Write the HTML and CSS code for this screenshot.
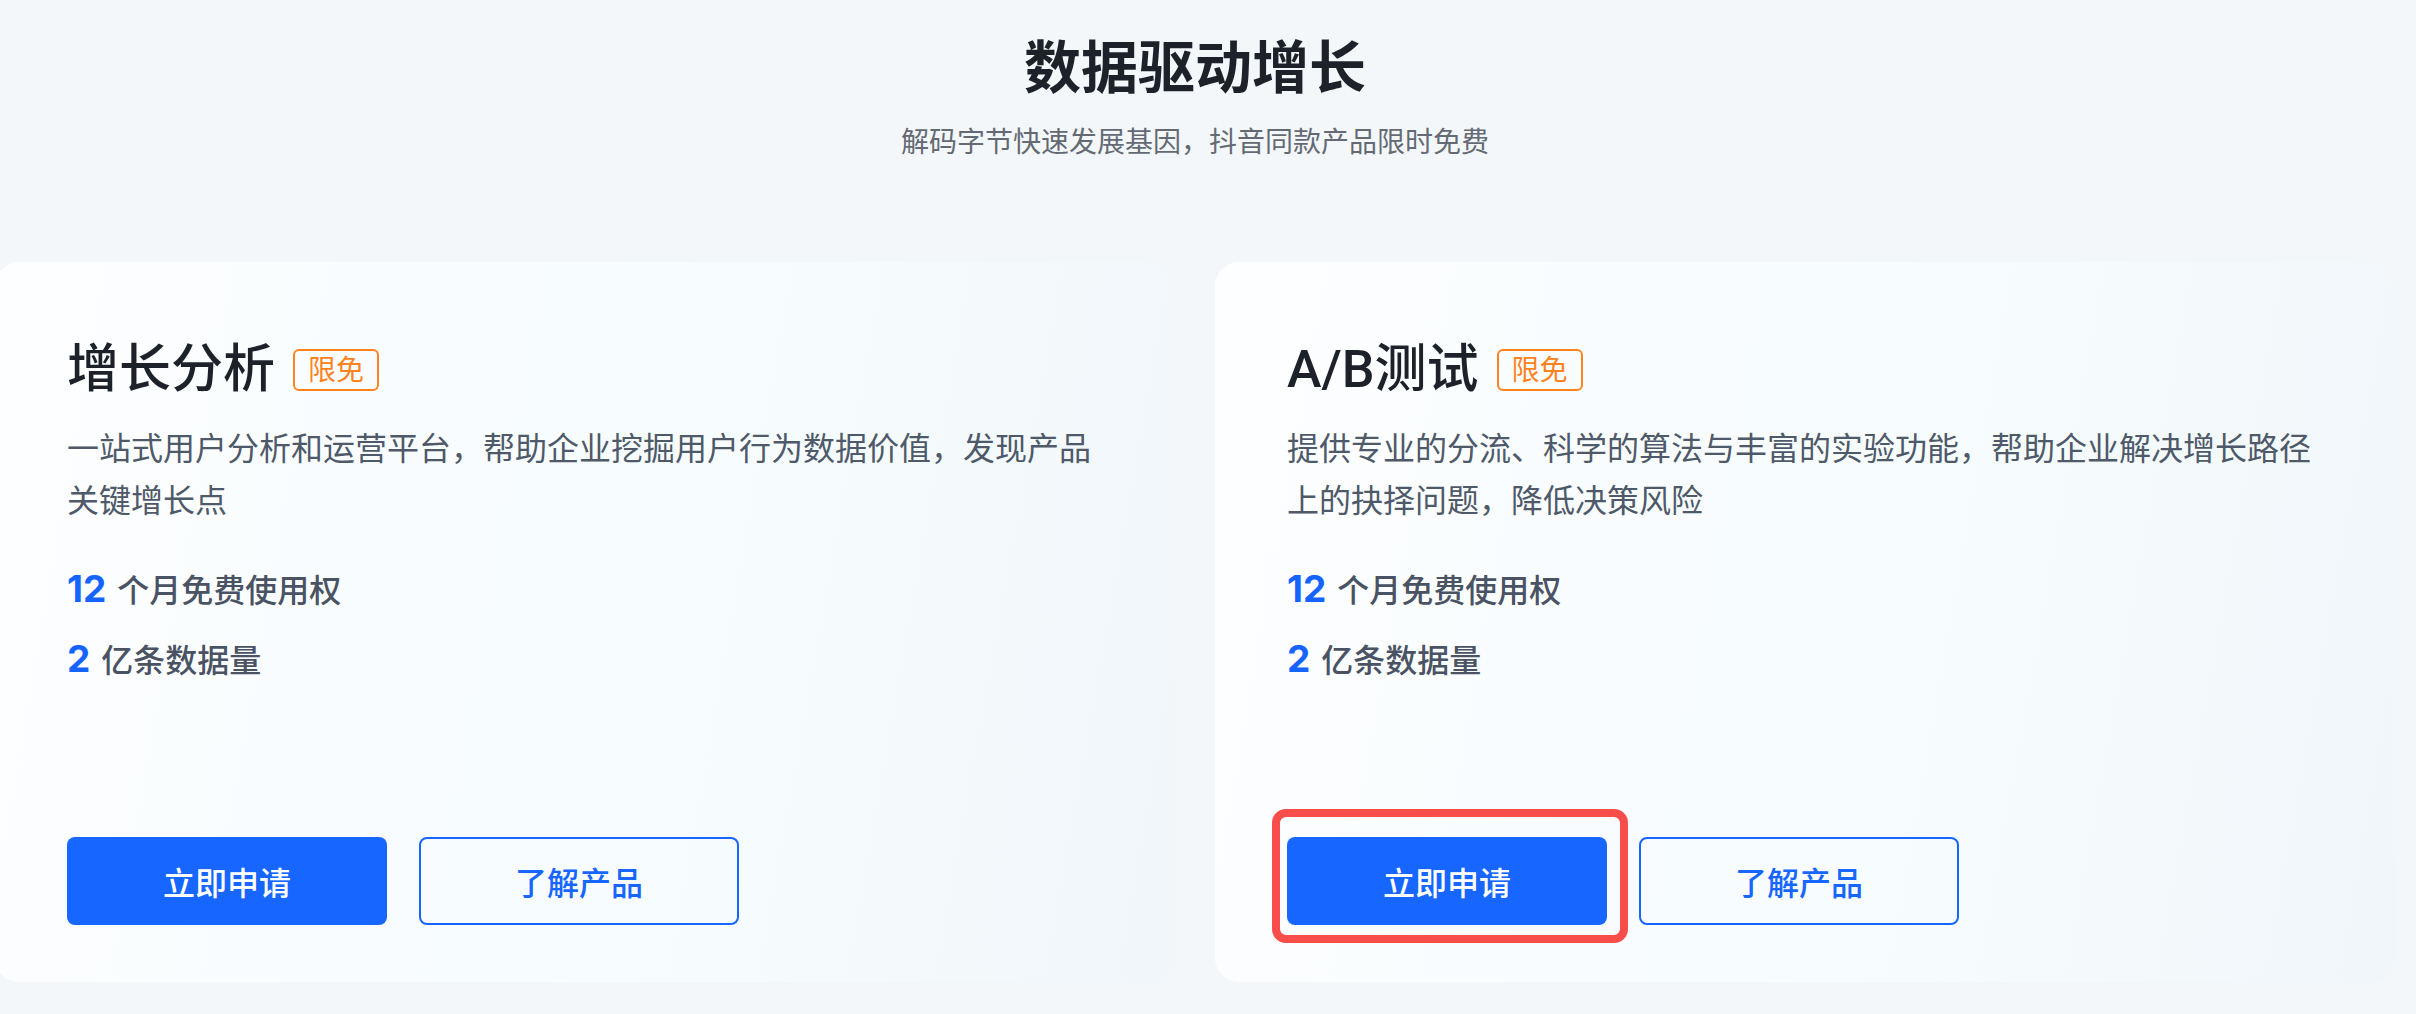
FILE: index.html
```html
<!DOCTYPE html>
<html lang="zh-CN">
<head>
<meta charset="utf-8">
<title>数据驱动增长</title>
<link rel="stylesheet" href="styles.css">
</head>
<body>
<section class="growth">
  <header class="growth-head">
    <h1 class="growth-title">数据驱动增长</h1>
    <p class="growth-sub">解码字节快速发展基因，抖音同款产品限时免费</p>
  </header>
  <div class="cards">
    <article class="card">
      <div class="card-head">
        <h2 class="card-title">增长分析</h2>
        <span class="badge">限免</span>
      </div>
      <p class="card-desc">一站式用户分析和运营平台，帮助企业挖掘用户行为数据价值，发现产品关键增长点</p>
      <ul class="features">
        <li class="feature"><span class="num">12</span><span class="feat-text">个月免费使用权</span></li>
        <li class="feature"><span class="num">2</span><span class="feat-text">亿条数据量</span></li>
      </ul>
      <div class="actions">
        <div class="btn-wrap"><a class="btn btn-primary">立即申请</a></div>
        <a class="btn btn-outline">了解产品</a>
      </div>
    </article>
    <article class="card">
      <div class="card-head">
        <h2 class="card-title">A/B测试</h2>
        <span class="badge">限免</span>
      </div>
      <p class="card-desc">提供专业的分流、科学的算法与丰富的实验功能，帮助企业解决增长路径上的抉择问题，降低决策风险</p>
      <ul class="features">
        <li class="feature"><span class="num">12</span><span class="feat-text">个月免费使用权</span></li>
        <li class="feature"><span class="num">2</span><span class="feat-text">亿条数据量</span></li>
      </ul>
      <div class="actions">
        <div class="btn-wrap"><a class="btn btn-primary">立即申请</a><span class="highlight"></span></div>
        <a class="btn btn-outline">了解产品</a>
      </div>
    </article>
  </div>
</section>
</body>
</html>
```
FILE: styles.css
```css
* { box-sizing: border-box; }
html, body {
  margin: 0;
  padding: 0;
  background: #f3f7fa;
}
body {
  font-family: "Inter", "Noto Sans CJK SC", "Noto Sans", sans-serif;
  width: 2416px;
  height: 1014px;
  overflow: hidden;
}
.growth {
  padding-top: 28px;
  margin-left: -5px;
  width: 2400px;
}
.growth-head {
  text-align: center;
}
.growth-title {
  margin: 0;
  font-size: 57px;
  line-height: 80px;
  font-weight: 700;
  color: #1d2129;
}
.growth-sub {
  margin: 14px 0 0;
  font-size: 28px;
  line-height: 40px;
  color: #646a73;
}
.cards {
  margin-top: 100px;
  display: grid;
  grid-template-columns: 1180px 1180px;
  gap: 40px;
}
.card {
  height: 720px;
  border-radius: 24px;
  padding: 72px 72px 57px;
  background: linear-gradient(100deg, #fdfeff 0%, #f8fcfe 40%, #f6fcfd 62%, #f1f6fa 100%);
  display: flex;
  flex-direction: column;
}
.card-head {
  display: flex;
  align-items: center;
}
.card-title {
  margin: 0;
  font-family: "Roboto", "Noto Sans CJK SC", sans-serif;
  font-size: 52px;
  line-height: 72px;
  font-weight: 500;
  color: #1d2129;
}
.badge {
  margin-left: 18px;
  height: 42px;
  padding: 0 13px;
  border: 2px solid #ff8221;
  border-radius: 6px;
  font-size: 28px;
  line-height: 38px;
  color: #ff8221;
}
.card-desc {
  margin: 17px 0 0;
  font-size: 32px;
  line-height: 52px;
  color: #4e5969;
}
.features {
  list-style: none;
  margin: 38px 0 0;
  padding: 0;
  display: flex;
  flex-direction: column;
  gap: 20px;
}
.feature {
  display: flex;
  align-items: baseline;
  line-height: 48px;
}
.num {
  font-size: 37px;
  font-weight: 700;
  color: #1664ff;
  margin-right: 11px;
}
.feat-text {
  font-size: 32px;
  font-weight: 500;
  color: #4a5363;
}
.actions {
  margin-top: auto;
  display: flex;
  gap: 32px;
}
.btn-wrap {
  position: relative;
}
.btn {
  display: flex;
  align-items: center;
  justify-content: center;
  width: 320px;
  height: 88px;
  border-radius: 8px;
  font-size: 32px;
  font-weight: 500;
  text-decoration: none;
}
.btn-primary {
  background: #1766ff;
  color: #ffffff;
}
.btn-outline {
  border: 2px solid #1766ff;
  color: #1766ff;
  background: transparent;
}
.highlight {
  position: absolute;
  left: -15px;
  top: -28px;
  width: 356px;
  height: 134px;
  border: 8px solid #f84d4a;
  border-radius: 14px;
  pointer-events: none;
}
```
